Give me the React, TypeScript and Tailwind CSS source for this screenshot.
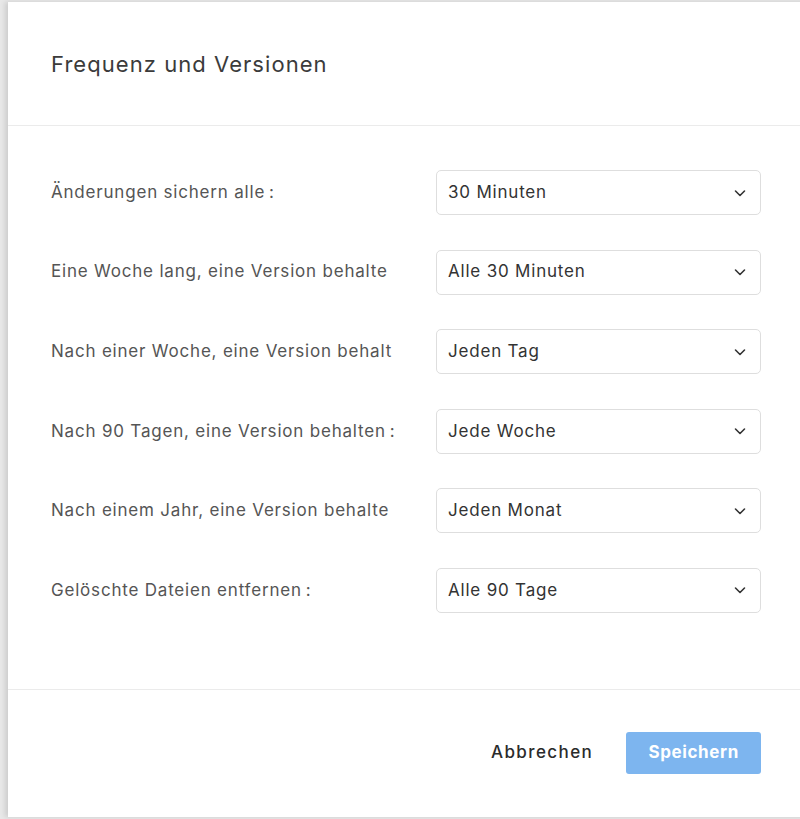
import React from "react";

const rows: [string, string][] = [
  ["Änderungen sichern alle\u2009:", "30 Minuten"],
  ["Eine Woche lang, eine Version behalte", "Alle 30 Minuten"],
  ["Nach einer Woche, eine Version behalt", "Jeden Tag"],
  ["Nach 90 Tagen, eine Version behalten\u2009:", "Jede Woche"],
  ["Nach einem Jahr, eine Version behalte", "Jeden Monat"],
  ["Gelöschte Dateien entfernen\u2009:", "Alle 90 Tage"],
];

function Chevron() {
  return (
    <svg width="14" height="14" viewBox="0 0 14 14" fill="none">
      <path d="M2.5 5 L7 9.5 L11.5 5" stroke="#333" strokeWidth="1.6" strokeLinecap="round" strokeLinejoin="round" />
    </svg>
  );
}

export default function App() {
  return (
    <div
      className="w-[800px] h-[819px] overflow-hidden bg-[#e8e8e8] pl-2 pt-[2px]"
      style={{ fontFamily: "Inter, 'Open Sans', sans-serif" }}
    >
      <div className="w-[820px] h-[815px] bg-white flex flex-col shadow-[-3px_0_5px_rgba(0,0,0,0.12)]">
        <div className="h-[124px] flex items-center pl-[43px] pt-[1px] border-b border-[#ebebeb]">
          <h1 className="text-[22px] text-[#3b3b3b] font-normal tracking-[1.05px]">Frequenz und Versionen</h1>
        </div>
        <div className="flex-1 flex flex-col pl-[43px] pt-[44px] gap-[34.6px]">
          {rows.map(([label, value]) => (
            <div key={label} className="flex items-center h-[45px]">
              <div className="w-[385px] text-[17px] text-[#555] tracking-[0.8px]">{label}</div>
              <div className="w-[325px] h-[45px] border border-[#dedede] rounded-[5px] flex items-center justify-between pl-[11px] pr-[13px]">
                <span className="text-[17px] text-[#333] tracking-[0.8px]">{value}</span>
                <Chevron />
              </div>
            </div>
          ))}
        </div>
        <div className="h-[128px] border-t border-[#ebebeb] flex items-center pl-[483px] pb-[1px]">
          <button className="text-[17px] font-medium text-[#2b2b2b] tracking-[1.4px]">Abbrechen</button>
          <button className="ml-[33px] w-[135px] h-[42px] rounded-[3px] bg-[#7db5ef] text-white text-[17px] font-bold tracking-[0.6px]">
            Speichern
          </button>
        </div>
      </div>
    </div>
  );
}
